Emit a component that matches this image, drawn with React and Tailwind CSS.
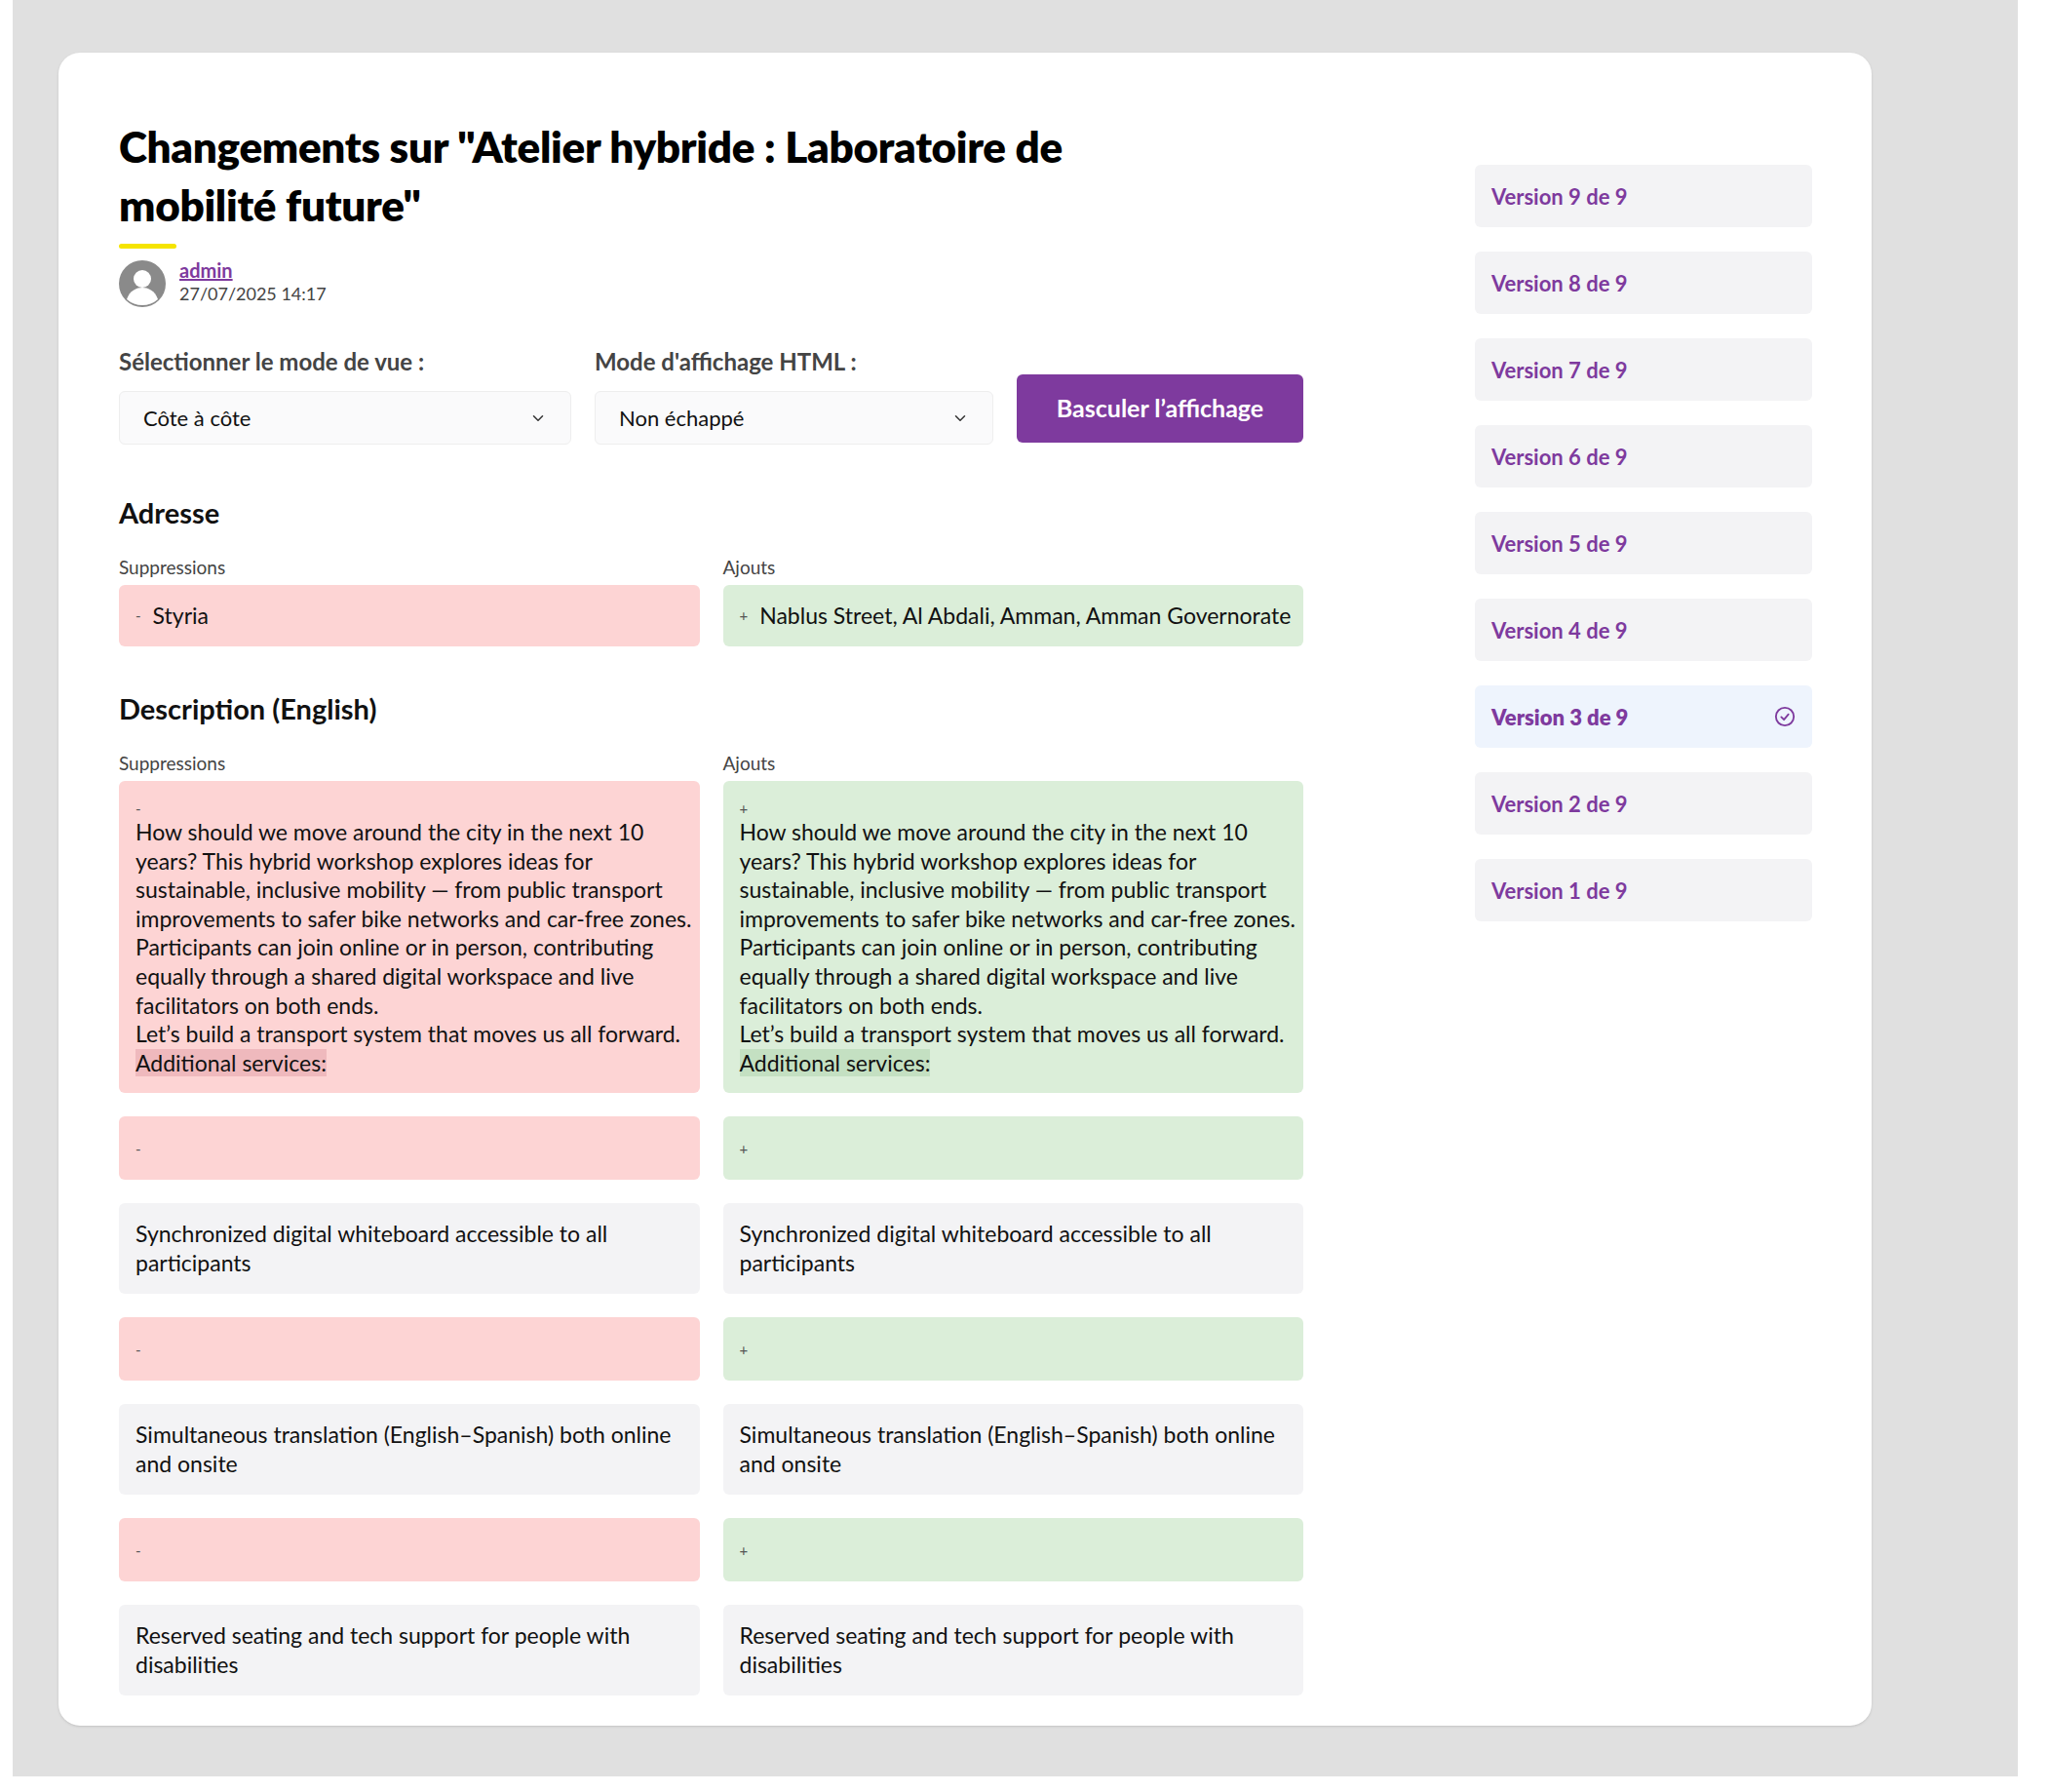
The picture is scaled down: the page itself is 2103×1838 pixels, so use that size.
import React from "react";

const font = { fontFamily: "Lato, 'Noto Sans', sans-serif" };

const descLines = [
  "How should we move around the city in the next 10",
  "years? This hybrid workshop explores ideas for",
  "sustainable, inclusive mobility — from public transport",
  "improvements to safer bike networks and car-free zones.",
  "Participants can join online or in person, contributing",
  "equally through a shared digital workspace and live",
  "facilitators on both ends.",
  "Let’s build a transport system that moves us all forward.",
];

const pairs = [
  ["Synchronized digital whiteboard accessible to all", "participants"],
  ["Simultaneous translation (English–Spanish) both online", "and onsite"],
  ["Reserved seating and tech support for people with", "disabilities"],
];

const Chevron = () => (
  <svg width="18" height="18" viewBox="0 0 24 24" fill="none" stroke="#333" strokeWidth="2" strokeLinecap="round" strokeLinejoin="round">
    <path d="M6 9l6 6 6-6" />
  </svg>
);

const DescBox = ({ sign, bg, hl }) => (
  <div className={`rounded-md ${bg} px-[17px] pt-[18px] pb-[16px] text-[23px] leading-[29.6px] text-[#111]`}>
    <div className="text-[15px] leading-[20px] text-[#555]">{sign}</div>
    {descLines.map((l) => (
      <div key={l} className="whitespace-nowrap">{l}</div>
    ))}
    <span className={hl}>Additional services:</span>
  </div>
);

const Sign = ({ sign, bg }) => (
  <div className={`h-[65px] rounded-md ${bg} px-[17px] flex items-center text-[15px] text-[#555]`}>{sign}</div>
);

const Plain = ({ lines }) => (
  <div className="h-[93px] rounded-md bg-[#f3f3f5] px-[17px] flex flex-col justify-center text-[23px] leading-[29.6px] text-[#111]">
    {lines.map((l) => (
      <div key={l} className="whitespace-nowrap">{l}</div>
    ))}
  </div>
);

export default function App() {
  return (
    <div className="bg-white w-[2103px] h-[1838px]" style={font}>
      <div className="ml-[13px] w-[2057px] h-[1822px] bg-[#e0e0e0] pt-[54px] pl-[47px]">
        <div className="w-[1860px] h-[1716px] overflow-hidden rounded-[22px] bg-white shadow-sm flex pl-[62px] pt-[66px]">
          <div className="w-[1215px]">
            <h1 className="text-[44px] leading-[60px] font-extrabold text-black tracking-[-0.3px]">
              Changements sur "Atelier hybride : Laboratoire de
              <br />
              mobilité future"
            </h1>
            <div className="mt-[10px] h-[5px] w-[59px] rounded-full bg-[#f5e400]" />
            <div className="mt-[12px] flex items-start gap-[14px]">
              <svg width="48" height="48" viewBox="0 0 48 48">
                <circle cx="24" cy="24" r="24" fill="#8a8a8a" />
                <circle cx="24" cy="19" r="9" fill="#fff" />
                <path d="M8 40c3-9 10-12 16-12s13 3 16 12a24 24 0 0 1-32 0z" fill="#fff" />
              </svg>
              <div className="-mt-[2px]">
                <div className="text-[20px] leading-[24px] font-bold text-[#7e3a9e] underline">admin</div>
                <div className="text-[18px] leading-[24px] text-[#444]">27/07/2025 14:17</div>
              </div>
            </div>
            <div className="mt-[38px] flex items-end gap-[24px]">
              <div>
                <div className="text-[24px] font-bold text-[#444] mb-[12px]">Sélectionner le mode de vue :</div>
                <div className="w-[464px] h-[55px] rounded-md border border-[#eee] bg-[#fafafb] px-[24px] flex items-center justify-between text-[22px] text-[#111]">
                  Côte à côte <Chevron />
                </div>
              </div>
              <div>
                <div className="text-[24px] font-bold text-[#444] mb-[12px]">Mode d'affichage HTML :</div>
                <div className="w-[409px] h-[55px] rounded-md border border-[#eee] bg-[#fafafb] px-[24px] flex items-center justify-between text-[22px] text-[#111]">
                  Non échappé <Chevron />
                </div>
              </div>
              <button className="mb-[2px] w-[294px] h-[70px] rounded-md bg-[#7e3a9e] text-white text-[25px] font-bold">
                Basculer l’affichage
              </button>
            </div>

            <h2 className="mt-[48px] text-[29px] font-bold text-[#111]">Adresse</h2>
            <div className="mt-[20px] grid grid-cols-2 gap-[24px]">
              <div>
                <div className="text-[19px] text-[#444] mb-[4px]">Suppressions</div>
                <div className="h-[63px] rounded-md bg-[#fdd4d4] px-[17px] flex items-center gap-[12px] text-[23px] text-[#111]">
                  <span className="text-[15px] text-[#555]">-</span>Styria
                </div>
              </div>
              <div>
                <div className="text-[19px] text-[#444] mb-[4px]">Ajouts</div>
                <div className="h-[63px] rounded-md bg-[#dbeed9] px-[17px] flex items-center gap-[12px] text-[23px] text-[#111] whitespace-nowrap">
                  <span className="text-[15px] text-[#555]">+</span>Nablus Street, Al Abdali, Amman, Amman Governorate
                </div>
              </div>
            </div>

            <h2 className="mt-[42px] text-[29px] font-bold text-[#111]">Description (English)</h2>
            <div className="mt-[20px] grid grid-cols-2 gap-x-[24px] gap-y-[24px]">
              <div>
                <div className="text-[19px] text-[#444] mb-[4px]">Suppressions</div>
                <DescBox sign="-" bg="bg-[#fdd4d4]" hl="bg-[#efb9bd]" />
              </div>
              <div>
                <div className="text-[19px] text-[#444] mb-[4px]">Ajouts</div>
                <DescBox sign="+" bg="bg-[#dbeed9]" hl="bg-[#c4e0c2]" />
              </div>
              {pairs.map((p) => (
                <React.Fragment key={p[0]}>
                  <Sign sign="-" bg="bg-[#fdd4d4]" />
                  <Sign sign="+" bg="bg-[#dbeed9]" />
                  <Plain lines={p} />
                  <Plain lines={p} />
                </React.Fragment>
              ))}
            </div>
          </div>

          <div className="ml-[176px] mt-[49px] w-[346px] flex flex-col gap-[25px]">
            {[9, 8, 7, 6, 5, 4, 3, 2, 1].map((n) => (
              <div
                key={n}
                className={`h-[64px] rounded-md px-[17px] flex items-center justify-between text-[22px] text-[#7e3a9e] ${
                  n === 3 ? "bg-[#eef4fd] font-extrabold" : "bg-[#f3f3f5] font-bold"
                }`}
              >
                Version {n} de 9
                {n === 3 && (
                  <svg width="22" height="22" viewBox="0 0 24 24" fill="none" stroke="#7e3a9e" strokeWidth="2" strokeLinecap="round" strokeLinejoin="round">
                    <circle cx="12" cy="12" r="10" />
                    <path d="M8 12.5l3 3 5-6" />
                  </svg>
                )}
              </div>
            ))}
          </div>
        </div>
      </div>
    </div>
  );
}
